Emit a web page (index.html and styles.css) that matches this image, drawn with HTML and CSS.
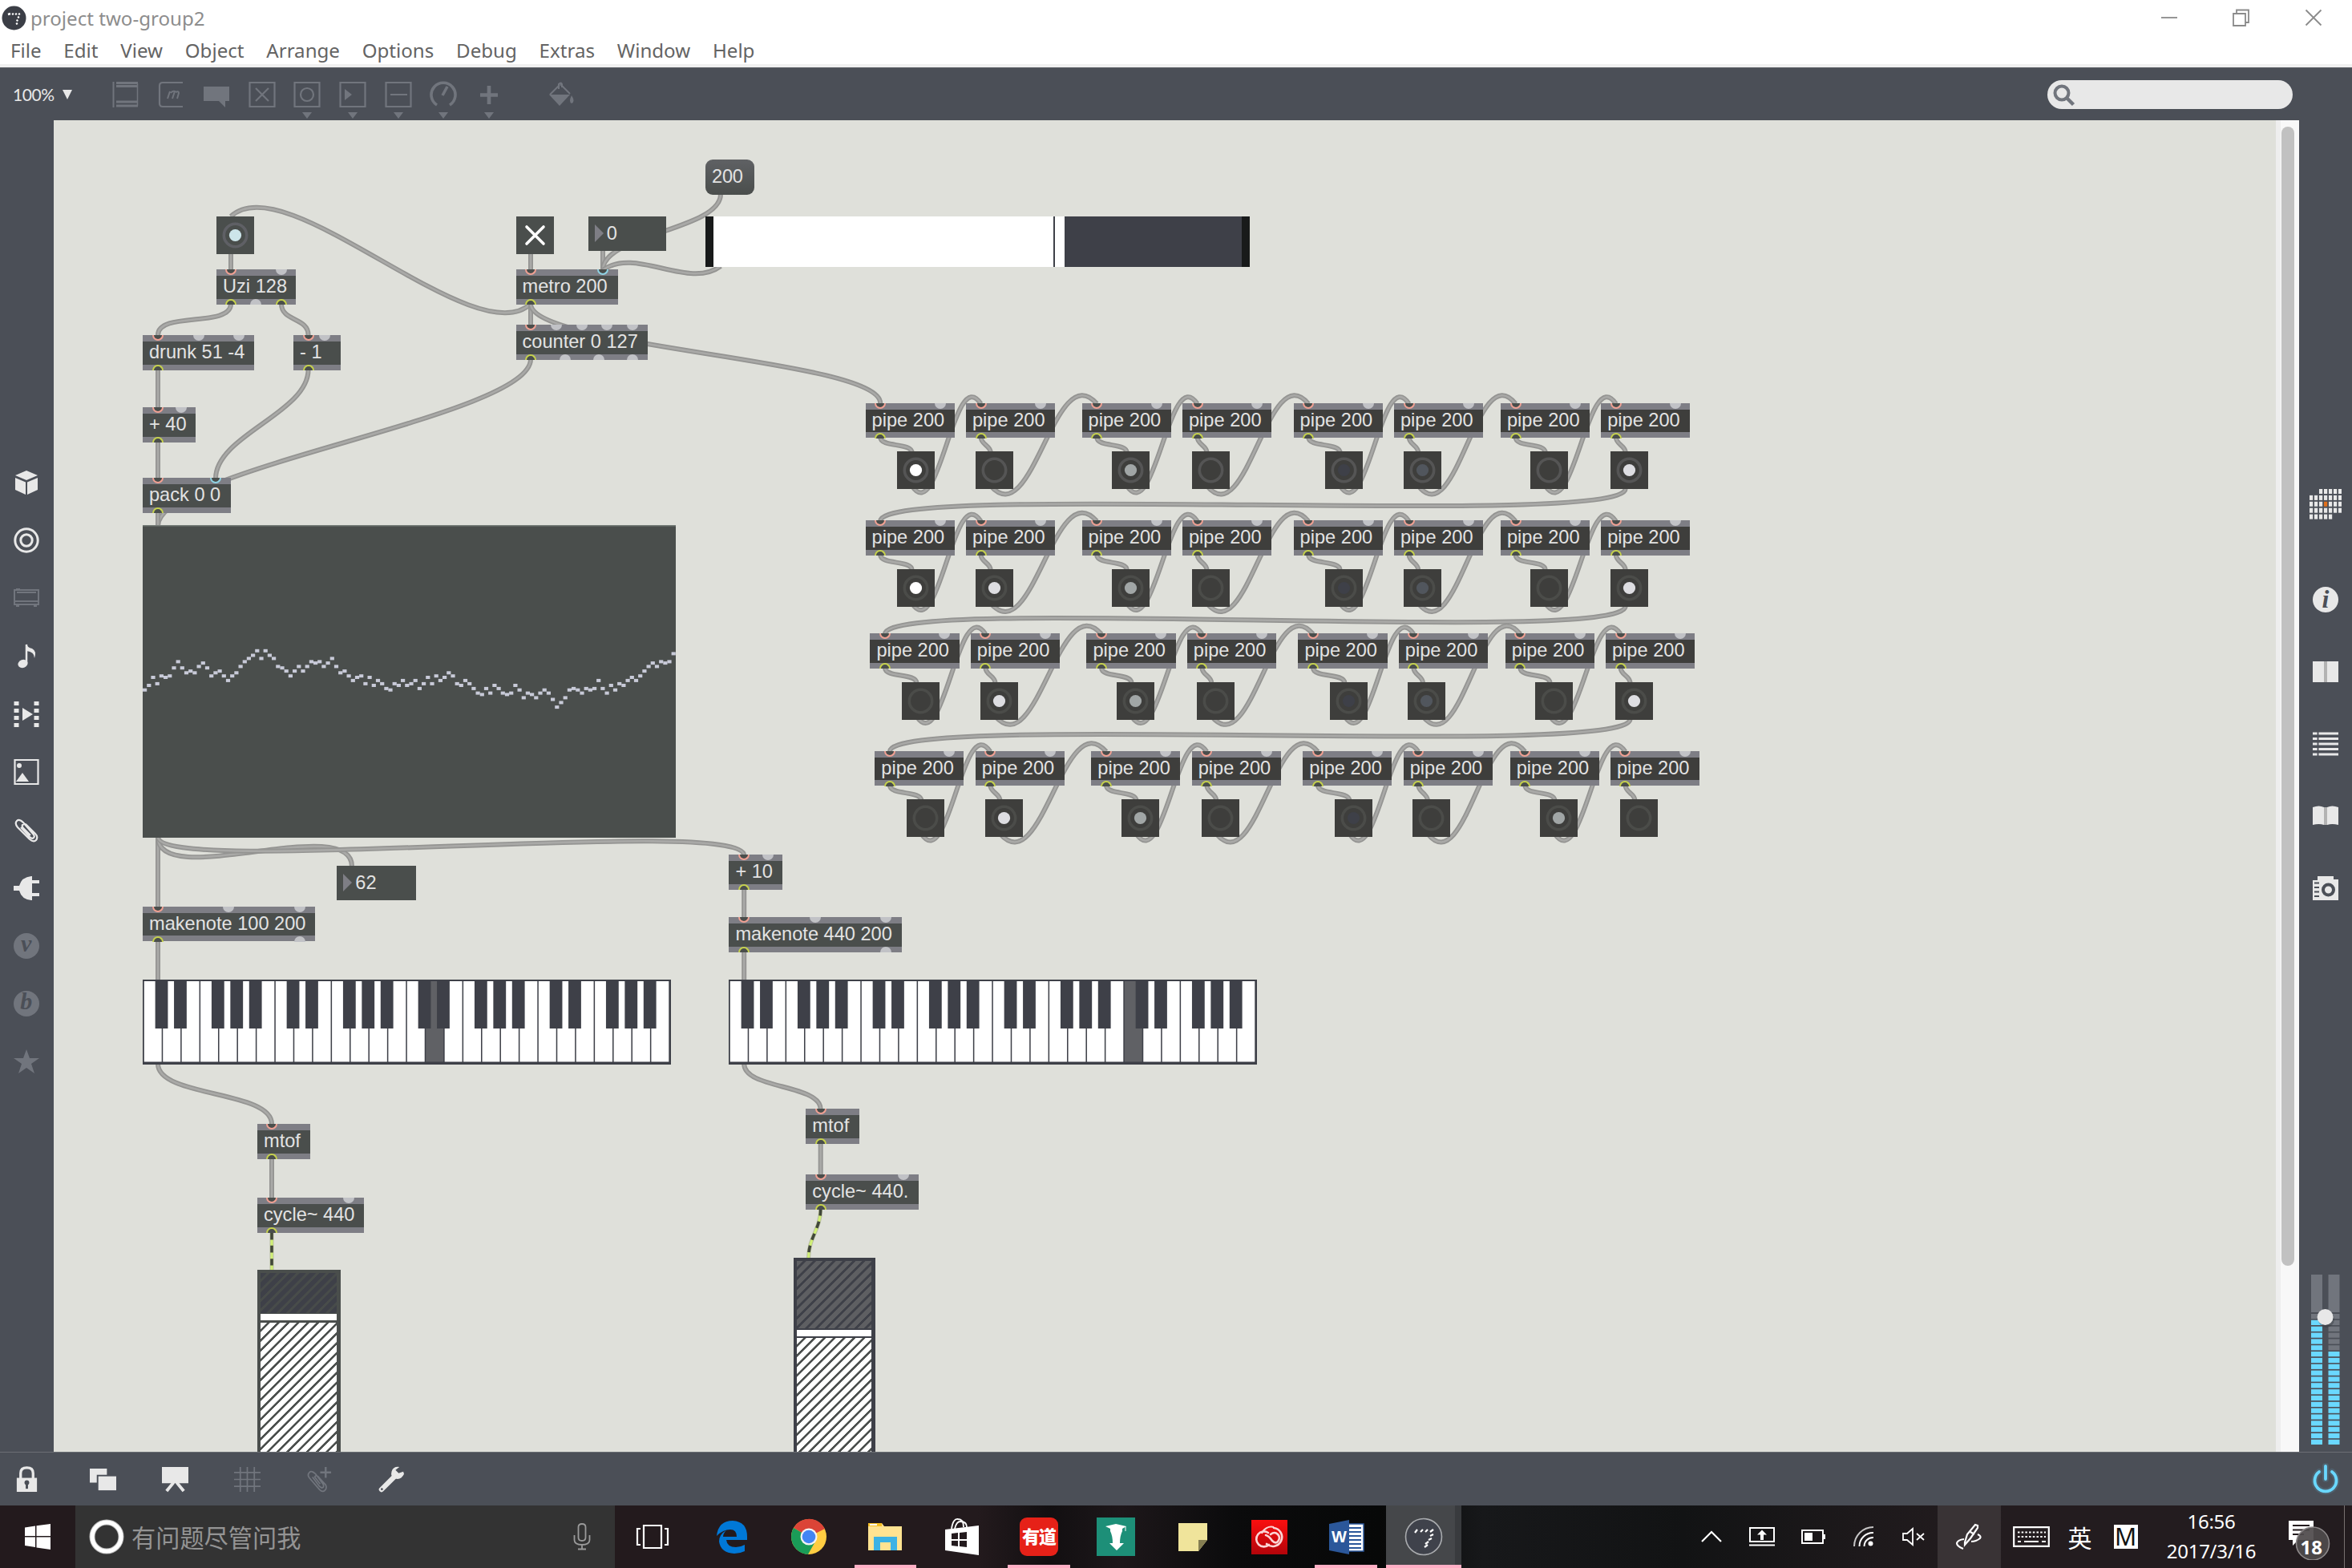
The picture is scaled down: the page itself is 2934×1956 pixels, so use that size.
FILE: index.html
```html
<!DOCTYPE html>
<html lang="en">
<head>
<meta charset="utf-8">
<title>project two-group2</title>
<link rel="stylesheet" href="styles.css">
</head>
<body>
<div class="screen">
  <header class="titlebar">
    <svg class="app-icon" width="31" height="31" viewBox="0 0 31 31"><circle cx="15.500" cy="15.500" r="15" fill="#3b3e46"/><path d="M8 11l3-1M13 11l2-1M17 11l2-1M21 11l2-1M20 15l2-1M18.500 19l2-1M18 23l2-1" stroke="#fff" stroke-width="2.400"/></svg>
    <span class="title">project two-group2</span>
    <div class="win-controls">
      <svg width="22" height="22" viewBox="0 0 22 22"><path d="M1 11h20" stroke="#8b8b8b" stroke-width="1.800"/></svg>
      <svg width="22" height="22" viewBox="0 0 22 22"><path d="M1 6h15v15H1zM5 6V1.500h15V17h-4" fill="none" stroke="#8b8b8b" stroke-width="1.800"/></svg>
      <svg width="22" height="22" viewBox="0 0 22 22"><path d="M1.500 1.500l19 19M20.500 1.500l-19 19" stroke="#8b8b8b" stroke-width="1.800"/></svg>
    </div>
  </header>
  <nav class="menubar">
    <span>File</span><span>Edit</span><span>View</span><span>Object</span><span>Arrange</span><span>Options</span><span>Debug</span><span>Extras</span><span>Window</span><span>Help</span>
  </nav>
  <div class="toolbar">
    <span class="zoom">100%</span>
    <svg class="zoom-arrow" width="12" height="12" viewBox="0 0 12 12"><path d="M0 0h12L6 12z" fill="#e8e8e8"/></svg>
    <div class="tools">
      <svg viewBox="0 0 34 48"><path d="M1.500 1v32" stroke-width="2"/><path d="M5 2.500h27M5 6.500h27M5 26h27M5 31h27" stroke-width="3"/><path d="M31.500 3v28" stroke-width="1.500"/></svg>
      <svg viewBox="0 0 34 48"><path d="M31 2H6Q2 2 2 6v22q0 4 4 4h25" stroke-width="2.200"/><path d="M12 22l3-9M18 22l3-9q-3-1-5 2M24 22l2-7q0-3-4-1" stroke-width="2"/></svg>
      <svg viewBox="0 0 34 48"><path d="M1 7h32v18h-5v8l-8-8H1z" fill="#71757d" stroke="none"/></svg>
      <svg viewBox="0 0 34 48"><path d="M1.500 2h31v30h-31zM9 9l16 16M25 9L9 25"/></svg>
      <svg viewBox="0 0 34 48"><path d="M1.500 2h31v30h-31z"/><circle cx="17" cy="17" r="8"/><path class="solid" d="M11 39h12l-6 8z"/></svg>
      <svg viewBox="0 0 34 48"><path d="M1.500 2h31v30h-31z"/><path class="solid" d="M7 10l9 7-9 7z"/><path class="solid" d="M11 39h12l-6 8z"/></svg>
      <svg viewBox="0 0 34 48"><path d="M1.500 2h31v30h-31zM7 17h21"/><path class="solid" d="M11 39h12l-6 8z"/></svg>
      <svg viewBox="0 0 34 48"><path d="M9 30A15 15 0 1 1 25 30M16 18l6-11" stroke-width="3.600"/><path class="solid" d="M11 39h12l-6 8z"/></svg>
      <svg viewBox="0 0 34 48"><path d="M17 6v23M6 17.500h22" stroke-width="4.600"/><path class="solid" d="M11 39h12l-6 8z"/></svg>
      <svg class="bucket" viewBox="0 0 34 48"><path d="M16 4l12 12M15 5L3 17M14 10V4q3-3 4 0v4" stroke-width="2"/><path class="solid" d="M2 17h26L15 31z"/><path class="solid" d="M30 18q5 8 0 10-4-2 0-10z"/></svg>
    </div>
    <div class="search"><svg width="28" height="28" viewBox="0 0 28 28"><circle cx="11" cy="11" r="8.500" fill="none" stroke="#71757d" stroke-width="4"/><path d="M16.500 16.500l9 9" stroke="#71757d" stroke-width="4.500"/></svg></div>
  </div>
  <main class="main">
    <aside class="rail rail-left">
      <svg viewBox="0 0 32 32"><path d="M16 1l14 6-14 6L2 7z" fill="#e8e8e8"/><path d="M2 10l13 5.500V31L2 25zM30 10l-13 5.500V31l13-6z" fill="#e8e8e8"/></svg>
      <svg viewBox="0 0 32 32"><g fill="none" stroke="#e8e8e8" stroke-width="3"><circle cx="16" cy="16" r="14.200"/><circle cx="16" cy="16" r="7.200"/></g></svg>
      <svg viewBox="0 0 32 32"><g fill="none" stroke="#71757d" stroke-width="2"><path d="M1 6h30v18H1zM4 9h24M1 20h30M3 5h5M3 26h4M25 26h4"/></g></svg>
      <svg viewBox="0 0 32 32"><path d="M16 2v23" stroke="#e8e8e8" stroke-width="2.500"/><ellipse cx="11.500" cy="26" rx="6.200" ry="5" transform="rotate(-20 11.500 26)" fill="#e8e8e8"/><path d="M16 1q1 5 7 6 6 3 3 12 0-8-10-9z" fill="#e8e8e8"/></svg>
      <svg viewBox="0 0 32 32"><path d="M3.500 0v32M28.500 0v32" stroke="#e8e8e8" stroke-width="6" stroke-dasharray="5 4"/><path d="M11 8l13 8-13 8z" fill="#e8e8e8"/></svg>
      <svg viewBox="0 0 32 32"><path d="M1.500 1h29v30h-29z" fill="none" stroke="#e8e8e8" stroke-width="2.200"/><path d="M3 28l8-11 8 11z" fill="#e8e8e8"/><circle cx="7" cy="8" r="3" fill="#e8e8e8"/></svg>
      <svg viewBox="0 0 32 32"><path d="M9 13l11 12q3 3 5 1 2-2-1-5L12 7Q7 2 4 5t1 8l15 15q5 4 8 1 3-4-1-8L16 10q-3-2-5 0-1 2 1 4l9 9" fill="none" stroke="#e8e8e8" stroke-width="2.200"/></svg>
      <svg viewBox="0 0 32 32"><path d="M0 13h7q3-11 15-12h1v30h-1Q10 30 7 19H0zM22 6h10v4H22zM22 22h10v4H22z" fill="#e8e8e8"/></svg>
      <span class="badge">v</span>
      <span class="badge">b</span>
      <svg viewBox="0 0 32 32"><path d="M16 1l4 11h12l-10 7 4 12-10-7-10 7 4-12L0 12h12z" fill="#71757d"/></svg>
    </aside>
    <section class="patcher" id="patcher">
      <svg class="cords" id="cords" width="2772" height="1661" viewBox="67 150 2772 1661"></svg>
    </section>
    <div class="scroll"><div class="thumb"></div></div>
    <aside class="rail-right">
      <svg class="grid-icon" id="gridIcon" width="40" height="38" viewBox="0 0 40 38"></svg>
      <span class="info">i</span>
      <svg viewBox="0 0 32 32"><path d="M0 3h32v26H0z" fill="#e8e8e8"/><path d="M14 3h4v26h-4z" fill="#b3b3b3"/></svg>
      <svg viewBox="0 0 32 32"><path d="M0 3h32M0 9.500h32M0 16h32M0 22.500h32M0 29h32" stroke="#e8e8e8" stroke-width="3"/><path d="M6.500 0v32" stroke="#4b4f57" stroke-width="1.800"/></svg>
      <svg viewBox="0 0 32 32"><path d="M0 5q8-3 14 0h4q6-3 14 0v22q-8-2-14 0h-4q-6-2-14 0z" fill="#e8e8e8"/><path d="M14 5h4v22h-4z" fill="#b3b3b3"/></svg>
      <svg viewBox="0 0 32 32"><path d="M0 6h6V1h20v4h6v26H0z" fill="#e8e8e8"/><circle cx="19.500" cy="18" r="6.500" fill="none" stroke="#4b4f57" stroke-width="4"/><path d="M2 9.500h6M2 15h6M2 20.500h6M2 26h6" stroke="#4b4f57" stroke-width="2"/></svg>
      <svg class="meter" id="meter" width="44" height="212" viewBox="0 0 44 212"></svg>
    </aside>
  </main>
  <footer class="bottombar">
    <svg class="lock" viewBox="0 0 34 34"><path d="M4 15h26v18H4z" fill="#e8e8e8"/><path d="M9 16V9q0-7 8-7t8 7v7" fill="none" stroke="#e8e8e8" stroke-width="3.400"/><circle cx="17" cy="21" r="3" fill="#4b4f57"/><path d="M17 22v7" stroke="#4b4f57" stroke-width="3"/></svg>
    <svg viewBox="0 0 34 34"><path d="M0 3h22v8H9v10H0z" fill="#e8e8e8"/><path d="M11 13h23v18H11z" fill="#e8e8e8"/></svg>
    <svg viewBox="0 0 34 34"><path d="M0 1h34v21H0z" fill="#e8e8e8"/><path d="M15 21L6 32M19 21l9 11" stroke="#e8e8e8" stroke-width="4"/></svg>
    <svg viewBox="0 0 34 34"><path d="M8 1v32M17 1v32M26 1v32M0 8h34M0 17h34M0 26h34" stroke="#71757d" stroke-width="1.800"/></svg>
    <svg viewBox="0 0 34 34"><path d="M8 14l9 12q3 3 5 1 1-2-1-5L12 10Q7 5 4 8t0 7l13 15q4 4 7 1t1-7L15 13q-3-2-4 1l7 9" fill="none" stroke="#71757d" stroke-width="1.800"/><path d="M25 1v14M18 8h14" stroke="#71757d" stroke-width="2.500"/></svg>
    <svg viewBox="0 0 34 34"><path d="M4 30L23 11" stroke="#e8e8e8" stroke-width="6.500" stroke-linecap="round"/><path d="M27 1q-8-1-10 6t5 9 11-6l-1-3-6 2-4-4z" fill="#e8e8e8"/><circle cx="4.500" cy="29.500" r="1.400" fill="#4b4f57"/></svg>
    <svg class="power" viewBox="0 0 44 44"><g fill="none" stroke="#6ad8ff" stroke-linecap="round"><path d="M14 13A13.500 13.500 0 1 0 30 13M22 6v16" stroke-width="8" opacity=".14"/><path d="M14 13A13.500 13.500 0 1 0 30 13M22 6v16" stroke-width="3.800"/></g></svg>
  </footer>
  <div class="taskbar">
    <div class="start"><svg width="32" height="32" viewBox="0 0 32 32"><path d="M0 4.500l13-2V15H0zM14.500 2.200L32 0v15H14.500zM0 16.500h13V29l-13-2zM14.500 16.500H32V32l-17.500-2.400z" fill="#fff"/></svg></div>
    <div class="cortana">
      <svg width="44" height="44" viewBox="0 0 44 44"><circle cx="22" cy="22" r="18" fill="none" stroke="#bdbdbd" stroke-width="7"/><circle cx="22" cy="22" r="18" fill="none" stroke="#fff" stroke-width="5"/></svg>
      <span>有问题尽管问我</span>
      <svg class="mic" width="22" height="34" viewBox="0 0 22 34"><path d="M6.500 5q0-4 4.500-4t4.500 4v13q0 4-4.500 4t-4.500-4zM1.500 15v6q0 6 9.500 6t9.500-6v-6M11 27v5M6 32.500h10" fill="none" stroke="#9a9a9a" stroke-width="1.800"/></svg>
    </div>
    <div class="apps">
      <div class="app view"><svg viewBox="0 0 48 48"><path d="M13 10h22v28H13zM9 14H5v20h4M39 14h4v20h-4" fill="none" stroke="#fff" stroke-width="2.200"/></svg></div>
      <div class="app"><svg viewBox="0 0 48 48"><path d="M5 23Q7 4 25 4q18 1 18 20v4H17q1 9 12 9 6 0 11-3v8q-6 3-13 3-17-1-19-15 0-9 9-14-4 4-4 8h17q0-9-8-9-9 0-17 8z" fill="#0078d7"/></svg></div>
      <div class="app"><svg viewBox="0 0 48 48"><circle cx="24" cy="24" r="22" fill="#ffcd42"/><path d="M24 24L5 13A22 22 0 0 1 44 14z" fill="#db4437"/><path d="M5 13A22 22 0 0 0 23 46l9-16-8-6z" fill="#1a9c58"/><circle cx="24" cy="24" r="10.500" fill="#f3f3f3"/><circle cx="24" cy="24" r="8.300" fill="#4285f4"/></svg></div>
      <div class="app running"><svg viewBox="0 0 48 48"><path d="M3 7h17l3 4h22v30H3z" fill="#ffe391"/><path d="M3 7h17v4H3z" fill="#f5bd22"/><path d="M5 8h9v2H5z" fill="#fff"/><path d="M10 41V24h29v17h-8V31H18v10z" fill="#3bb2e4"/></svg></div>
      <div class="app"><svg viewBox="0 0 48 48"><path d="M3 15L45 10v37L3 41z" fill="#fff"/><path d="M11 14Q13 1 19 2q7 0 7 10M15 14q2-9 7-9 8 0 8 7" fill="none" stroke="#fff" stroke-width="1.800"/><path d="M11 20l8-1v8h-8zM21 19l9-1v9h-9zM11 29h8v7l-8-1zM21 29h9v8l-9-1z" fill="#231a1d"/></svg></div>
      <div class="app running"><div class="youdao">有道</div></div>
      <div class="app"><svg viewBox="0 0 48 48"><path d="M0 0h48v48H0z" fill="#1d8f78"/><path d="M11 11l13-3 13 3-5 3v3q-3 6-3 15h5l-9 9-9-9h4q0-9-3-15v-3z" fill="#fff"/><path d="M36 11v6" stroke="#fff"/></svg></div>
      <div class="app"><svg viewBox="0 0 48 48"><path d="M6 7h36v21L31 42H6z" fill="#f0e49b"/><path d="M42 28H31v14z" fill="#857e52"/></svg></div>
      <div class="app cc"><svg viewBox="0 0 48 48"><defs><linearGradient id="cc" x1="0" y1="0" x2="0" y2="1"><stop offset="0" stop-color="#fa0f0f"/><stop offset="1" stop-color="#b3040a"/></linearGradient></defs><path d="M1 3h45v43H1z" fill="url(#cc)"/><g fill="none" stroke="#fbd5d5" stroke-width="2.600" stroke-linecap="round"><path d="M23 34a9.500 9.500 0 1 1-1-15M29 13a11.500 11.500 0 1 1-9 20"/><path d="M19 22q4 1 8 7 4 4 7 1 4-5 0-9t-9 0"/></g><path d="M14 20a12.500 12.500 0 0 1 15-8" fill="none" stroke="#fbd5d5" stroke-width="2"/></svg></div>
      <div class="app running word"><svg viewBox="0 0 48 48"><path d="M23 8h23v34H23z" fill="#fff" stroke="#2b579a" stroke-width="1.500"/><path d="M28 13h15M28 18h15M28 23h15M28 28h15M28 33h15M28 38h15" stroke="#2b579a" stroke-width="2.200"/><path d="M3 8l25-5v43L3 41z" fill="#2b579a"/><text x="15.500" y="31" text-anchor="middle" class="w">W</text></svg></div>
      <div class="app running active"><svg viewBox="0 0 48 48"><circle cx="24" cy="24" r="22.500" fill="#3f424b" stroke="#a9abae" stroke-width="1.600"/><path d="M13 19l3-4M20 18l3-3M26 18l3-3M32 18l4-3M32 23l4-2M30 28l4-2M26 33l4-3M25 37l4-3" stroke="#fff" stroke-width="2.200"/></svg></div>
    </div>
    <div class="tray">
      <div class="t1"><svg width="28" height="16" viewBox="0 0 28 16"><path d="M2 14L14 2l12 12" fill="none" stroke="#fff" stroke-width="2.200"/></svg></div>
      <div class="t2"><svg width="32" height="24" viewBox="0 0 32 24"><path d="M1 1h30v17H1zM0 22.500h32" fill="none" stroke="#fff" stroke-width="2"/><path d="M16 3.500l6 6h-4V16h-4V9.500h-4z" fill="#fff"/></svg></div>
      <div class="t1"><svg width="30" height="18" viewBox="0 0 30 18"><path d="M1 1h26v16H1zM29 6v6" fill="none" stroke="#fff" stroke-width="2"/><path d="M4 4h10v10H4z" fill="#fff"/></svg></div>
      <div class="t2"><svg width="26" height="26" viewBox="0 0 26 26"><g fill="none" stroke="#fff" stroke-width="2"><path d="M1 25A24 24 0 0 1 25 1" opacity=".75"/><path d="M7.500 25A17 17 0 0 1 25 8M13.500 25A11 11 0 0 1 25 14"/></g><circle cx="21.500" cy="21.500" r="3" fill="#fff"/></svg></div>
      <div class="t3"><svg width="28" height="24" viewBox="0 0 28 24"><path d="M1 8h5l7-6v20l-7-6H1zM18 8l9 8M27 8l-9 8" fill="none" stroke="#fff" stroke-width="1.800"/></svg></div>
      <div class="t4"><svg width="34" height="34" viewBox="0 0 34 34"><path d="M12 24l3-10L25 2l3 1v3L19 19l-7 8zM19 11l5 3M28 14q5 2 3 5-5 4-11 4M11 20q-8 1-9 5 0 4 8 7" fill="none" stroke="#fff" stroke-width="2.200"/></svg></div>
      <div class="t5"><svg width="46" height="26" viewBox="0 0 46 26"><path d="M1.200 1.200h43.600v23.600H1.200z" fill="none" stroke="#fff" stroke-width="2.200"/><path d="M6 7.500h35M6 13h35" stroke="#fff" stroke-width="2" stroke-dasharray="2.500 2.200"/><path d="M6 19h4M14 19h18M36 19h5" stroke="#fff" stroke-width="2"/></svg></div>
      <div class="t6">英</div>
      <div class="t7"><b>M</b></div>
      <div class="clock"><span>16:56</span><span>2017/3/16</span></div>
      <div class="notif"><svg width="56" height="52" viewBox="0 0 56 52"><path d="M3 3h31v24H15l-7 7v-7H3z" fill="#fff"/><path d="M8 9h21M8 14.500h21M8 20h14" stroke="#231a1d" stroke-width="2.200"/><circle cx="33" cy="31.500" r="20.500" fill="#4f4a4b" fill-opacity=".93" stroke="#8d898a" stroke-width="1.600"/></svg><b>18</b></div>
      <div class="edge-line"></div>
    </div>
  </div>
</div>
<script src="patch.js"></script>
</body>
</html>
```
FILE: styles.css
```css
* { box-sizing: border-box; }
body { margin: 0; background: #4b4f57; font-family: "Open Sans", "Noto Sans", sans-serif; }
.screen { width: 2934px; height: 1956px; display: flex; flex-direction: column; overflow: hidden; }
svg { display: block; flex: none; }

.titlebar { height: 42px; background: #fff; display: flex; align-items: center; padding: 2px 37px 0 2px; flex: none; }
.title { margin-left: 5px; font-size: 24.100px; color: #8d8d8d; font-family: "Noto Sans", sans-serif; }
.win-controls { margin-left: auto; display: flex; gap: 68px; }
.menubar { height: 42px; background: #fff; border-bottom: 4px solid #f0f0f0; display: flex; align-items: center; padding: 2px 0 0 13px; gap: 27.800px; font-size: 24.100px; color: #646464; font-family: "Noto Sans", sans-serif; flex: none; }

.toolbar { height: 66px; background: #4b4f57; display: flex; align-items: center; padding-left: 16px; padding-right: 74px; flex: none; border-top: 1px solid #5d6067; }
.zoom { width: 54px; color: #e8e8e8; font-family: "Lato", sans-serif; font-size: 21px; letter-spacing: -0.4px; }
.zoom-arrow { margin-left: 8px; }
.tools { display: flex; margin-left: 50px; gap: 22.6px; padding-top: 14px; }
.tools svg { width: 34px; height: 48px; fill: none; stroke: #71757d; stroke-width: 2.200; }
.tools .solid { fill: #71757d; stroke: none; }
.tools .bucket { margin-left: 34px; }
.search { margin-left: auto; width: 306px; height: 36px; border-radius: 18px; background: #e8e8e8; padding: 5px 7px; }

.main { height: 1661px; display: flex; flex: none; }
.rail { width: 67px; background: #4b4f57; display: flex; flex-direction: column; align-items: center; padding-top: 435.500px; padding-right: 1.500px; gap: 40.300px; }
.rail svg, .badge { width: 32px; height: 32px; flex: none; }
.badge { border-radius: 50%; background: #71757d; color: #4b4f57; font: italic bold 30px/26px "Liberation Serif", serif; text-align: center; }
.patcher { width: 2772px; background: #dfe0da; position: relative; overflow: hidden; }
.cords { position: absolute; left: 0; top: 0; }
.scroll { width: 29px; background: #f8f8f8; border-left: 6px solid #eeeeee; padding: 8px 0 0 1px; }
.thumb { width: 16px; height: 1421px; border-radius: 8px; background: #c1c1c1; }
.rail-right { flex: 1; background: #4b4f57; display: flex; flex-direction: column; align-items: center; padding-top: 460px; }
.rail-right svg:not(.grid-icon):not(.meter), .info { width: 32px; height: 32px; margin-bottom: 58px; }
.grid-icon { margin-bottom: 84px; }
.info { flex: none; border-radius: 50%; background: #e8e8e8; color: #4b4f57; font: italic bold 32px/31px "Liberation Serif", serif; text-align: center; }
.meter { margin-top: auto; margin-bottom: 9px; }

.obj { position: absolute; height: 43.5px; background: #4a4e4c; border: solid #7e7e85; border-width: 8px 0 7.500px; color: #e3e3e3; font: 23.600px/27px "Liberation Sans", Arial, sans-serif; padding-left: 8px; white-space: pre; }
.obj.pipe { background: #3e3e3c; }
.port { position: absolute; width: 14px; height: 7px; margin-left: -7px; background: #c1c2c6; }
.port.in { top: -8px; border-radius: 0 0 7px 7px; }
.port.out { bottom: -7.500px; border-radius: 7px 7px 0 0; }
.port.hot, .port.cold { background: #4a4e4c; border: 2px solid #f0a093; border-top: 0; }
.port.cold { border-color: #8fd3e4; }
.port.live { background: #4a4e4c; border: 2px solid #c6d24c; border-bottom: 0; }
.bang { position: absolute; width: 47px; height: 47px; background: #3e3e3c; }
.bang.main-bang, .toggle { background: #4a4e4c; }
.toggle { position: absolute; width: 47px; height: 47px; }
.number { position: absolute; height: 43px; background: #4a4e4c; color: #e3e3e3; font: 23.600px/42px "Liberation Sans", Arial, sans-serif; padding-left: 23px; }
.number::before { content: ""; position: absolute; left: 8px; top: 10px; border-left: 11px solid #7e7e85; border-top: 11.500px solid transparent; border-bottom: 11.500px solid transparent; }
.message { position: absolute; width: 61px; height: 44px; border-radius: 9px; background: linear-gradient(#5f6164, #4a4e4c); color: #e3e3e3; font: 23.600px/43px "Liberation Sans", Arial, sans-serif; padding-left: 8px; letter-spacing: -0.2px; }
.rslider { position: absolute; width: 679px; height: 63px; background: #fff; border: solid #181a1a; border-width: 0 10px; display: flex; justify-content: flex-end; }
.rslider .mark { width: 2px; background: #3e4048; }
.rslider .rest { width: 221px; margin-left: 12px; background: #3e4048; }
.block { position: absolute; }
.gain { position: absolute; padding: 3.500px 5px 0 3.500px; display: flex; flex-direction: column; }
.gain .level { height: 8px; background: #fff; margin: 1.500px 0 2.500px; flex: none; }
.gain .above { flex: none; }
.gain .below { flex: 1; background: repeating-linear-gradient(135deg, #fff 0 5.500px, #4a4e4c 6.100px 8.100px, #fff 8.700px); }

.bottombar { height: 67px; background: #4b4f57; border-top: 1.500px solid #6b6e74; display: flex; align-items: center; padding: 0 11px 0 17px; gap: 57px; flex: none; }
.bottombar svg { width: 33px; height: 33px; }
.bottombar .lock { margin-right: 5px; }
.bottombar .power { width: 44px; height: 44px; margin-left: auto; }

.taskbar { height: 78px; display: flex; flex: none; background: linear-gradient(90deg, #231a1d 0 1220px, #120f11 1310px, #1d171a 1400px, #0b0b0c 1540px, #070808 1720px, #17181a 1850px, #121314 2100px, #1d191b 2320px, #231c1f 2500px 100%); color: #fff; }
.start { width: 94px; display: flex; align-items: center; justify-content: center; }
.cortana { width: 673px; background: #333; display: flex; align-items: center; padding: 0 30px 0 17px; color: #949494; font: 30.200px "Noto Sans CJK SC", sans-serif; }
.cortana span { margin-left: 9px; }
.mic { margin-left: auto; }
.apps { display: flex; }
.app { width: 95.800px; height: 78px; display: flex; align-items: center; justify-content: center; position: relative; }
.app.view { width: 98px; padding-right: 4px; }
.app.cc { padding-left: 2px; }
.app svg { width: 48px; height: 48px; }
.app.running::after { content: ""; position: absolute; bottom: 0; left: 9px; right: 9px; height: 4px; background: #ffaec4; }
.app.active { background: #45474a; border-right: 8px solid #393b3e; width: 94px; padding-left: 7px; margin-left: 2px; }
.app.active::after { left: 0; right: -8px; }
.w { font: bold 20px "Liberation Sans", sans-serif; fill: #fff; }
.youdao { width: 48px; height: 48px; border-radius: 9px; background: #e62118; font: 900 22px/45px "Noto Sans CJK SC", sans-serif; letter-spacing: -1px; text-align: center; }
.tray { display: flex; margin-left: auto; }
.tray > div { display: flex; align-items: center; justify-content: center; }
.t1 { width: 64px; } .t2 { width: 63px; } .t3 { width: 60px; }
.t4 { width: 79px; background: #393335; } .t5 { width: 71px; padding-left: 6px; }
.t6 { width: 56px; font: 30px "Noto Sans CJK SC", sans-serif; }
.t7 { width: 58px; }
.t7 b { width: 30px; height: 30px; background: #fff; color: #111; font: 30px/30px "Noto Sans", sans-serif; text-align: center; }
.tray .clock { width: 156px; flex-direction: column; justify-content: space-between; padding: 3px 0 4px; font: 24px/34px "Noto Sans", sans-serif; letter-spacing: -0.300px; }
.tray .notif { width: 87px; position: relative; padding-top: 6px; }
.notif b { position: absolute; left: 33px; top: 37px; font: bold 24px/30px "Noto Sans", sans-serif; }
.edge-line { width: 1.500px; background: #77706f; margin-right: 9px; }
```
FILE: patch.js
```js
const OX = 67, OY = 150;
const patcher = document.getElementById('patcher');
const cords = document.getElementById('cords');
const NS = 'http://www.w3.org/2000/svg';

function add(cls, x, y, w, html) {
  const el = document.createElement('div');
  el.className = cls;
  el.style.left = (x - OX) + 'px';
  el.style.top = (y - OY) + 'px';
  if (w) el.style.width = w + 'px';
  if (html) el.innerHTML = html;
  patcher.appendChild(el);
  return el;
}

// Object box. Ports are [x, kind] with x in screen units.
function obj(text, x, y, w, ins, outs, extra) {
  let h = '';
  ins.forEach(p => h += `<i class="port in ${p[1] || ''}" style="left:${p[0] - x}px"></i>`);
  outs.forEach(p => h += `<i class="port out ${p[1] || ''}" style="left:${p[0] - x}px"></i>`);
  add('obj ' + (extra || ''), x, y, w, `<span>${text}</span>` + h);
}

function path(d, stroke, width, dash) {
  const p = document.createElementNS(NS, 'path');
  p.setAttribute('d', d);
  p.setAttribute('fill', 'none');
  p.setAttribute('stroke', stroke);
  p.setAttribute('stroke-width', width);
  if (dash) p.setAttribute('stroke-dasharray', dash);
  cords.appendChild(p);
}

// Patch cord with handles of (a, k) at both ends.
function cord(x0, y0, x1, y1, k = 0, a = 0) {
  const d = `M${x0} ${y0}C${x0 + a} ${y0 + k} ${x1 - a} ${y1 - k} ${x1} ${y1}`;
  path(d, '#949492', 6);
  path(d, '#a9a9a7', 2.6);
}
function signal(x0, y0, x1, y1, k) {
  const d = `M${x0} ${y0}C${x0} ${y0 + k} ${x1} ${y1 - k} ${x1} ${y1}`;
  path(d, '#b9bfa0', 5);
  path(d, '#d0f075', 3);
  path(d, '#41463a', 3.6, '8.5 7.5');
}

function bang(x, y, ring, dot, cls) {
  let s = `<svg width="47" height="47"><circle cx="23.5" cy="23.5" r="14.2" fill="none" stroke="${ring}" stroke-width="3.6"/>`;
  if (dot) s += `<circle cx="23.5" cy="23.5" r="7.6" fill="${dot}"/>`;
  add('bang ' + (cls || ''), x, y, 0, s + '</svg>');
}

// cords of the left-hand patch
cord(662, 379, 288, 270, 65, -69);
cord(288, 316, 288, 337);
cord(288, 379, 197, 418, 30);
cord(351, 379, 384.6, 418, 22);
cord(197, 461, 197, 509);
cord(197, 551, 197, 597);
cord(384.6, 461, 269, 597, 54);
cord(662, 448, 197, 656, 72);
cord(197, 639, 197, 656);
cord(662, 316, 662, 337);
cord(662, 379, 662, 406);
cord(752, 312, 752, 337);
cord(899, 242, 752, 337, 45);
cord(899, 332, 752, 337, 30, -40);
cord(662, 379, 1098.2, 503, 55);
cord(197, 1044, 197, 1131);
cord(197, 1044, 439, 1081, 68);
cord(197, 1044, 928.2, 1067, 50);
cord(197, 1173, 197, 1223);
cord(197, 1327, 339, 1402, 42);
cord(339, 1445, 339, 1495);
cord(928.2, 1109, 928.2, 1145);
cord(928.2, 1187, 928.2, 1223);
cord(928.2, 1327, 1023.7, 1384, 32);
cord(1023.7, 1426, 1023.7, 1466);
signal(339, 1538, 339, 1585, 10);
signal(1023.7, 1508, 1008.6, 1569, 25);

obj('Uzi 128', 270, 336, 99.4, [[288, 'hot'], [351]], [[288, 'live'], [319.4], [351, 'live']]);
obj('drunk 51 -4', 178, 418, 139, [[197, 'hot'], [247.5], [298.4]], [[197, 'live']]);
obj('- 1', 366, 418, 58.7, [[384.6, 'hot'], [404.6]], [[384.6, 'live']]);
obj('+ 40', 178, 508, 66.4, [[197, 'hot'], [226]], [[197, 'live']]);
obj('pack 0 0', 178, 596, 109.7, [[197, 'hot'], [269, 'cold']], [[197, 'live']]);
obj('metro 200', 643.5, 336, 127.2, [[662, 'hot'], [752, 'cold']], [[662, 'live']]);
obj('counter 0 127', 643.5, 405, 164.5, [[662, 'hot'], [694], [725.6], [757.3], [789]], [[662, 'live'], [704.6], [746.6], [789]]);
obj('makenote 100 200', 178, 1130.5, 214.8, [[197, 'hot'], [285.3], [374.4]], [[197, 'live'], [374.4]]);
obj('makenote 440 200', 909.4, 1144, 215.3, [[928.2, 'hot'], [1016.8], [1105.4]], [[928.2, 'live'], [1105.4]]);
obj('+ 10', 909.4, 1066, 66.6, [[928.2, 'hot'], [957.6]], [[928.2, 'live']]);
obj('mtof', 321, 1402, 66.3, [[339, 'hot']], [[339, 'live']]);
obj('cycle~ 440', 321, 1494, 132.8, [[339, 'hot'], [435]], [[339, 'live']]);
obj('mtof', 1005.3, 1383, 66.7, [[1023.7, 'hot']], [[1023.7, 'live']]);
obj('cycle~ 440.', 1005.3, 1465, 140.5, [[1023.7, 'hot'], [1127.5]], [[1023.7, 'live']]);

bang(270, 270, '#5f6065', '#cde5ea', 'main-bang');
add('toggle', 643.5, 270, 0, '<svg width="47" height="47"><path d="M13 13l21 21M34 13L13 34" stroke="#fff" stroke-width="3.6" stroke-linecap="round"/></svg>');
add('number', 733.7, 270, 97.3, '0');
add('number', 420.3, 1079.6, 98.3, '62');
add('message', 880, 199, 0, '200');
add('rslider', 880, 270, 0, '<div class="mark"></div><div class="rest"></div>');

// 4 x 8 grid of delays, each row feeding the next
const pipeX = [1079.6, 1205, 1349.6, 1475, 1613.6, 1739, 1872, 1997.2];
const bangX = [1118.9, 1217, 1387, 1486.8, 1652.9, 1750.5, 1909, 2009];
const rows = [[502.6, 0], [649.1, 0], [790, 5.8], [936.6, 11.7]];
const W = '#fff', L = '#dddde1', G = '#a1a6a6', D = '#3e4048', S = '#51565d', O = '';
const dots = [[W, O, G, O, D, S, O, L], [W, L, G, O, D, S, O, L], [O, L, G, O, D, S, O, L], [O, L, G, O, D, O, G, O]];
rows.forEach(([y, dx], r) => {
  for (let i = 0; i < 8; i++) {
    const px = pipeX[i] + dx + 18.6, bx = bangX[i] + dx + 18.7;
    cord(px, y + 43, bx, y + 62, i % 2 ? 9 : 13);
    if (i < 7) {
      const nx = pipeX[i + 1] + dx + 18.6, w = nx - bx;
      cord(bx, y + 103.5, nx, y + 1, w > 100 ? 60 : 52, w * 0.4);
    } else if (r < 3) {
      cord(bx, y + 107, pipeX[0] + rows[r + 1][1] + 18.6, rows[r + 1][0] + 1, 50);
    }
  }
});
rows.forEach(([y, dx], r) => {
  for (let i = 0; i < 8; i++) {
    const x = pipeX[i] + dx;
    obj('pipe 200', x, y, 111.2, [[x + 18.6, 'hot'], [x + 93]], [[x + 18.6, 'live']], 'pipe');
    bang(bangX[i] + dx, y + 60.7, r ? '#4b4c49' : '#555555', dots[r][i]);
  }
});

const ys = [618,602,574,596,569,574,569,541,519,541,558,552,558,536,524,541,569,558,552,569,585,569,558,536,519,508,497,481,508,481,497,508,536,541,552,569,552,536,552,536,519,524,519,536,524,508,536,558,552,569,585,574,569,596,574,602,585,596,613,618,596,602,585,602,596,585,613,596,574,596,569,585,574,558,569,596,602,585,596,613,629,634,613,629,602,613,629,634,629,602,618,645,629,634,645,629,618,629,651,678,662,645,618,613,618,629,613,618,613,585,613,629,602,618,596,602,585,574,585,569,552,536,524,536,519,524,519,491];
let ms = '<svg width="665" height="390"><rect width="665" height="390" fill="#4a4e4c"/><rect width="665" height="1.5" fill="#747b76"/>';
ys.forEach((v, i) => ms += `<rect x="${(i * 5.194).toFixed(1)}" y="${(v / 2.8 - 17).toFixed(1)}" width="5.2" height="4" fill="#c8cad8"/>`);
add('block', 178, 655, 665, ms + '</svg>');

function keyboard(x, y, held) {
  const w = 659, h = 106, kw = 23.43;
  let s = `<svg width="${w}" height="${h}"><rect width="${w}" height="${h}" fill="#3e4048"/>`;
  for (let i = 0; i < 28; i++)
    s += `<rect x="${(1.8 + i * kw).toFixed(2)}" y="2" width="21.9" height="100.5" fill="${i === held ? '#606165' : '#fff'}"/>`;
  for (let i = 0; i < 28; i++)
    if ([0, 1, 3, 4, 5].includes(i % 7))
      s += `<rect x="${(1.2 + (i + 1) * kw - 9).toFixed(2)}" y="1" width="15.8" height="60" fill="#3e4048"/>`;
  add('block', x, y, w, s + '</svg>');
}
keyboard(178, 1222, 15);
keyboard(909.4, 1222, 21);

function gain(x, y, w, above, frame, a, b) {
  const g = add('gain', x, y, w,
    `<div class="above" style="height:${above}px;background:repeating-linear-gradient(135deg,${a} 0 5.2px,${b} 5.8px 8.1px,${a} 8.7px)"></div><div class="level"></div><div class="below"></div>`);
  g.style.height = (1811 - y) + 'px';
  g.style.background = frame;
}
gain(321, 1584.3, 103.5, 50, '#4a4e4c', '#3e4048', '#484c4a');
gain(990.2, 1569, 101.5, 84.5, '#3e4048', '#5e5f62', '#3e4048');

let gi = '';
for (let c = 0; c < 7; c++)
  for (let r = 0; r < 5; r++) {
    if ((c < 2 && r === 0) || (c > 4 && r === 4)) continue;
    gi += `<rect x="${c * 6}" y="${r * 7.9}" width="4.2" height="6" fill="${c === 3 && r === 2 ? '#e0701c' : '#e8e8e8'}"/>`;
  }
document.getElementById('gridIcon').innerHTML = gi;

let mt = '';
[[4, 1], [25.5, 6]].forEach(([x, off]) => {
  mt += `<rect x="${x}" y="0" width="14" height="47" fill="#71757d"/>`;
  for (let i = 0; i < 21; i++)
    mt += `<rect x="${x}" y="${(49 + i * 7.84).toFixed(1)}" width="14" height="6.2" fill="${i < off ? '#71757d' : '#6ad8ff'}"/>`;
});
mt += '<circle cx="23" cy="56" r="10" fill="#33363c" opacity=".4"/><circle cx="21.600" cy="53" r="10" fill="#e8e8e8"/>';
document.getElementById('meter').innerHTML = mt;
```
